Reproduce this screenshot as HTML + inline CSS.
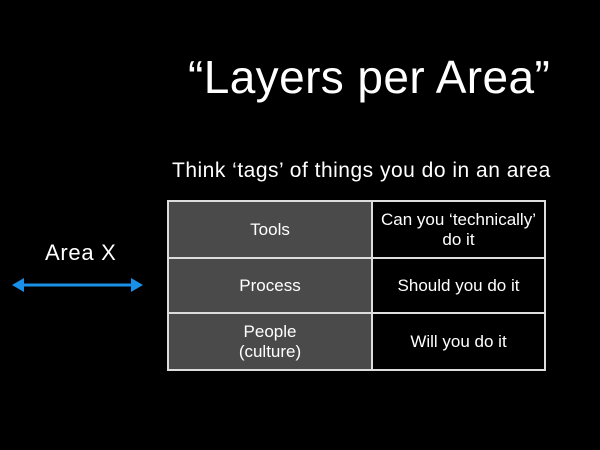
<!DOCTYPE html>
<html><head><style>
body{margin:0;width:600px;height:450px;background:#000;overflow:hidden;font-family:"Liberation Sans",sans-serif;color:#fff;position:relative}
.t{position:absolute;white-space:nowrap}
table{position:absolute;left:167px;top:200px;width:379px;height:169px;border-collapse:collapse;border:2px solid #ddd;table-layout:fixed}
td{border:2px solid #ddd;text-align:center;font-size:17px;line-height:20px;letter-spacing:0;white-space:nowrap;padding:0}
td.g{background:#4a4a4a;width:202px}
td.b{background:#000}
</style></head><body>
<div class="t" style="left:188px;top:50px;font-size:46px;letter-spacing:0.4px">“Layers per Area”</div>
<div class="t" style="left:172px;top:159px;font-size:21px;letter-spacing:0.5px">Think ‘tags’ of things you do in an area</div>
<div class="t" style="left:45px;top:240px;font-size:22px;letter-spacing:0.7px">Area X</div>
<svg style="position:absolute;left:0;top:0" width="160" height="300">
<line x1="20" y1="285" x2="135" y2="285" stroke="#1a8fe8" stroke-width="3"/>
<polygon points="12,285 24,278 24,292" fill="#1a8fe8"/>
<polygon points="143,285 131,278 131,292" fill="#1a8fe8"/>
</svg>
<table>
<tr style="height:57px"><td class="g">Tools</td><td class="b">Can you ‘technically’<br>do it</td></tr>
<tr style="height:55px"><td class="g">Process</td><td class="b">Should you do it</td></tr>
<tr style="height:57px"><td class="g">People<br>(culture)</td><td class="b">Will you do it</td></tr>
</table>
</body></html>
